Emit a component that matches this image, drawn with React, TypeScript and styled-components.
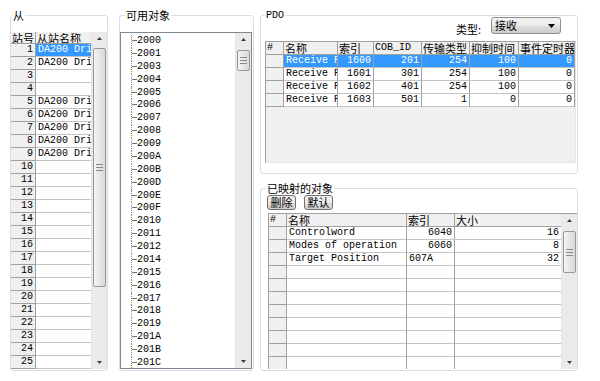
import React from "react";
import styled, { createGlobalStyle } from "styled-components";

const MONO = `"Liberation Mono", "Noto Sans CJK SC", monospace`;
const CJK = `"Noto Sans CJK SC", "Liberation Sans", sans-serif`;

const GlobalStyle = createGlobalStyle`
  html, body {
    margin: 0;
    padding: 0;
    background: #ffffff;
  }
  body {
    font-family: ${MONO};
    font-size: 10px;
    color: #000000;
  }
`;

const Window = styled.div`
  width: 600px;
  height: 381px;
  box-sizing: border-box;
  padding: 15px 0 0 10px;
  display: flex;
  align-items: flex-start;
  background: #ffffff;
  overflow: hidden;
`;

const GroupBox = styled.div`
  box-sizing: border-box;
  border: 1px solid #d5dfe5;
  border-radius: 3px;
  display: flex;
  flex-direction: column;
  flex: none;
`;

const SlaveGroup = styled(GroupBox)`
  width: 98px;
  height: 356px;
`;

const ObjectGroup = styled(GroupBox)`
  width: 135px;
  height: 356px;
  margin-left: 11px;
`;

const RightColumn = styled.div`
  display: flex;
  flex-direction: column;
  margin-left: 6px;
  width: 318px;
`;

const PdoGroup = styled(GroupBox)`
  width: 318px;
  height: 159px;
`;

const MappedGroup = styled(GroupBox)`
  width: 318px;
  height: 183px;
  margin-top: 14px;
`;

const GroupHead = styled.div<{ $h: number }>`
  display: flex;
  align-items: flex-start;
  margin-top: -7px;
  height: ${(p) => p.$h}px;
`;

const Legend = styled.div<{ $indent: number; $mono?: boolean }>`
  margin-left: ${(p) => p.$indent}px;
  padding: 0 1px;
  background: #ffffff;
  height: 13px;
  line-height: 13px;
  font-family: ${(p) => (p.$mono ? MONO : CJK)};
  font-size: ${(p) => (p.$mono ? 10 : 11)}px;
  white-space: nowrap;
`;

const TypeLabel = styled.div`
  margin: 14px 0 0 auto;
  line-height: 13px;
  font-family: ${CJK};
  font-size: 11px;
  white-space: nowrap;
`;

const Combo = styled.div`
  box-sizing: border-box;
  width: 70px;
  height: 17px;
  margin: 8px 16px 0 10px;
  padding: 0 5px 0 3px;
  display: flex;
  align-items: center;
  justify-content: space-between;
  border: 1px solid #8e8f8f;
  border-radius: 3px;
  background: linear-gradient(#f2f2f2 0%, #ebebeb 50%, #dddddd 51%, #cfcfcf 100%);
  font-family: ${CJK};
  font-size: 11px;
  line-height: 15px;
`;

const ButtonRow = styled.div`
  display: flex;
  gap: 8px;
  margin-left: 6px;
`;

const Button = styled.div`
  box-sizing: border-box;
  width: 29px;
  height: 15px;
  display: flex;
  align-items: center;
  justify-content: center;
  border: 1px solid #707070;
  border-radius: 3px;
  background: linear-gradient(#f2f2f2 0%, #ebebeb 50%, #dddddd 51%, #cfcfcf 100%);
  font-family: ${CJK};
  font-size: 11px;
  line-height: 13px;
`;

const Frame = styled.div`
  box-sizing: border-box;
  display: flex;
  overflow: hidden;
  border-top: 1px solid #a0a0a0;
  border-left: 1px solid #a0a0a0;
`;

const SlaveFrame = styled(Frame)`
  width: 96px;
  height: 337px;
  margin-top: 10px;
  border: none;
`;

const PdoFrame = styled(Frame)`
  width: 311px;
  height: 122px;
  margin: 8px 0 0 4px;
  border-right: 1px solid #e3e3e3;
  border-bottom: 1px solid #e3e3e3;
`;

const MappedFrame = styled(Frame)`
  width: 309px;
  height: 156px;
  margin: 3px 0 0 7px;
`;

const Grid = styled.div<{ $cols: string; $head: number }>`
  display: grid;
  grid-template-columns: ${(p) => p.$cols};
  grid-template-rows: ${(p) => p.$head}px;
  grid-auto-rows: 13px;
  align-content: start;
  flex: 1;
  min-width: 0;
  overflow: hidden;
  background: #f0f0f0;
`;

type Align = "left" | "right";

const Cell = styled.div<{
  $kind: "head" | "side" | "data";
  $align: Align;
  $sel?: boolean;
  $cjk?: boolean;
}>`
  box-sizing: border-box;
  padding: 0 2px 0 ${(p) => (p.$kind === "data" ? 2 : 1)}px;
  border-right: 1px solid #a0a0a0;
  border-bottom: 1px solid ${(p) => (p.$kind === "data" ? "#c4c4c4" : "#a0a0a0")};
  background: ${(p) =>
    p.$kind !== "data" ? "#f0f0f0" : p.$sel ? "#3399ff" : "#ffffff"};
  color: ${(p) => (p.$sel ? "#ffffff" : "#000000")};
  text-align: ${(p) => p.$align};
  font-family: ${(p) => (p.$cjk ? CJK : MONO)};
  font-size: ${(p) => (p.$cjk ? 11 : 10)}px;
  line-height: 12px;
  white-space: nowrap;
  overflow: hidden;
`;

const ScrollBar = styled.div`
  width: 15px;
  flex: none;
  display: flex;
  flex-direction: column;
  background: #eaeaea;
  border-left: 1px solid #e6e6e6;
`;

const ScrollArrow = styled.div`
  height: 13px;
  flex: none;
  display: flex;
  align-items: center;
  justify-content: center;
`;

const ScrollTrack = styled.div`
  flex: 1;
  display: flex;
  flex-direction: column;
  align-items: center;
`;

const Thumb = styled.div`
  box-sizing: border-box;
  width: 13px;
  display: flex;
  align-items: center;
  justify-content: center;
  border: 1px solid #979797;
  border-radius: 2px;
  background: linear-gradient(to right, #f4f4f4, #e6e6e6 50%, #d9d9d9);
`;

const TreeBox = styled.div`
  box-sizing: border-box;
  width: 132px;
  height: 337px;
  margin-top: 10px;
  display: flex;
  border: 1px solid #828790;
  background: #ffffff;
  overflow: hidden;
`;

const TreeList = styled.div`
  flex: 1;
  padding-top: 2px;
  overflow: hidden;
`;

const TreeItem = styled.div`
  display: flex;
  align-items: stretch;
  height: 12.88px;
  line-height: 12.88px;
  white-space: nowrap;
`;

const Branch = styled.span`
  display: block;
  height: 100%;
  width: 5px;
  margin-left: 10px;
  border-left: 1px dotted #8c8c8c;
  background: linear-gradient(#707070, #707070) no-repeat 0 5px / 5px 1px;
`;

const Arrow: React.FC<{ down?: boolean }> = ({ down }) => (
  <svg width="5" height="3" viewBox="0 0 5 3">
    <path d={down ? "M0 0H5L2.5 3Z" : "M2.5 0L5 3H0Z"} fill="#3c3c3c" />
  </svg>
);

const Grip = () => (
  <svg width="7" height="7" viewBox="0 0 7 7">
    <path d="M0 0.5H7M0 3.5H7M0 6.5H7" stroke="#8a8a8a" strokeWidth="1" />
  </svg>
);

const VScroll: React.FC<{ top: number; size: number }> = ({ top, size }) => (
  <ScrollBar>
    <ScrollArrow>
      <Arrow />
    </ScrollArrow>
    <ScrollTrack>
      <Thumb style={{ marginTop: top, height: size }}>{size > 20 && <Grip />}</Thumb>
    </ScrollTrack>
    <ScrollArrow>
      <Arrow down />
    </ScrollArrow>
  </ScrollBar>
);

type CellVal = string | { t: string; align: Align };
type Col = { w: number; head: string; align: Align };

const isCjk = (s: string) => /[^\x00-\x7f]/.test(s);

const DataGrid: React.FC<{
  cols: Col[];
  rows: CellVal[][];
  head?: number;
  selected?: number;
}> = ({ cols, rows, head = 13, selected }) => (
  <Grid $cols={cols.map((c) => `${c.w}px`).join(" ")} $head={head}>
    {cols.map((c) => (
      <Cell key={c.head} $kind="head" $align="left" $cjk={isCjk(c.head)}>
        {c.head}
      </Cell>
    ))}
    {rows.map((r, i) =>
      r.map((v, j) => {
        const t = typeof v === "string" ? v : v.t;
        const align = typeof v === "string" ? cols[j].align : v.align;
        return (
          <Cell
            key={`${i}-${j}`}
            $kind={j === 0 ? "side" : "data"}
            $align={align}
            $sel={j > 0 && i === selected}
          >
            {t}
          </Cell>
        );
      })
    )}
  </Grid>
);

const slaveCols: Col[] = [
  { w: 25, head: "站号", align: "right" },
  { w: 56, head: "从站名称", align: "left" },
];

const slaveRows: CellVal[][] = Array.from({ length: 25 }, (_, i) => {
  const n = i + 1;
  const named = n <= 2 || (n >= 5 && n <= 9);
  return [String(n), named ? "DA200 Dri" : ""];
});

const objects = [
  "2000", "2001", "2003", "2004", "2005", "2006", "2007", "2008", "2009",
  "200A", "200B", "200D", "200E", "200F", "2010", "2011", "2012", "2014",
  "2015", "2016", "2017", "2018", "2019", "201A", "201B", "201C", "201D",
];

const pdoCols: Col[] = [
  { w: 18, head: "#", align: "left" },
  { w: 54, head: "名称", align: "left" },
  { w: 36, head: "索引", align: "right" },
  { w: 48, head: "COB_ID", align: "right" },
  { w: 48, head: "传输类型", align: "right" },
  { w: 49, head: "抑制时间", align: "right" },
  { w: 56, head: "事件定时器", align: "right" },
];

const pdoRows: CellVal[][] = [
  ["", "Receive PDO1", "1600", "201", "254", "100", "0"],
  ["", "Receive PDO2", "1601", "301", "254", "100", "0"],
  ["", "Receive PDO3", "1602", "401", "254", "100", "0"],
  ["", "Receive PDO4", "1603", "501", "1", "0", "0"],
];

const mappedCols: Col[] = [
  { w: 18, head: "#", align: "left" },
  { w: 120, head: "名称", align: "left" },
  { w: 48, head: "索引", align: "right" },
  { w: 107, head: "大小", align: "right" },
];

const mappedRows: CellVal[][] = [
  ["", "Controlword", "6040", "16"],
  ["", "Modes of operation", "6060", "8"],
  ["", "Target Position", { t: "607A", align: "left" }, "32"],
  ...Array.from({ length: 8 }, () => ["", "", "", ""]),
];

export default function App() {
  return (
    <>
      <GlobalStyle />
      <Window>
        <SlaveGroup>
          <GroupHead $h={13}>
            <Legend $indent={1}>从</Legend>
          </GroupHead>
          <SlaveFrame>
            <DataGrid cols={slaveCols} rows={slaveRows} head={12} selected={0} />
            <VScroll top={3} size={239} />
          </SlaveFrame>
        </SlaveGroup>

        <ObjectGroup>
          <GroupHead $h={13}>
            <Legend $indent={5}>可用对象</Legend>
          </GroupHead>
          <TreeBox>
            <TreeList>
              {objects.map((o) => (
                <TreeItem key={o}>
                  <Branch />
                  {o}
                </TreeItem>
              ))}
            </TreeList>
            <VScroll top={4} size={21} />
          </TreeBox>
        </ObjectGroup>

        <RightColumn>
          <PdoGroup>
            <GroupHead $h={24}>
              <Legend $indent={4} $mono>
                PDO
              </Legend>
              <TypeLabel>类型:</TypeLabel>
              <Combo>
                <span>接收</span>
                <svg width="7" height="4" viewBox="0 0 7 4">
                  <path d="M0 0H7L3.5 4Z" fill="#000000" />
                </svg>
              </Combo>
            </GroupHead>
            <PdoFrame>
              <DataGrid cols={pdoCols} rows={pdoRows} selected={0} />
            </PdoFrame>
          </PdoGroup>

          <MappedGroup>
            <GroupHead $h={13}>
              <Legend $indent={5}>已映射的对象</Legend>
            </GroupHead>
            <ButtonRow>
              <Button>删除</Button>
              <Button>默认</Button>
            </ButtonRow>
            <MappedFrame>
              <DataGrid cols={mappedCols} rows={mappedRows} />
              <VScroll top={4} size={42} />
            </MappedFrame>
          </MappedGroup>
        </RightColumn>
      </Window>
    </>
  );
}
